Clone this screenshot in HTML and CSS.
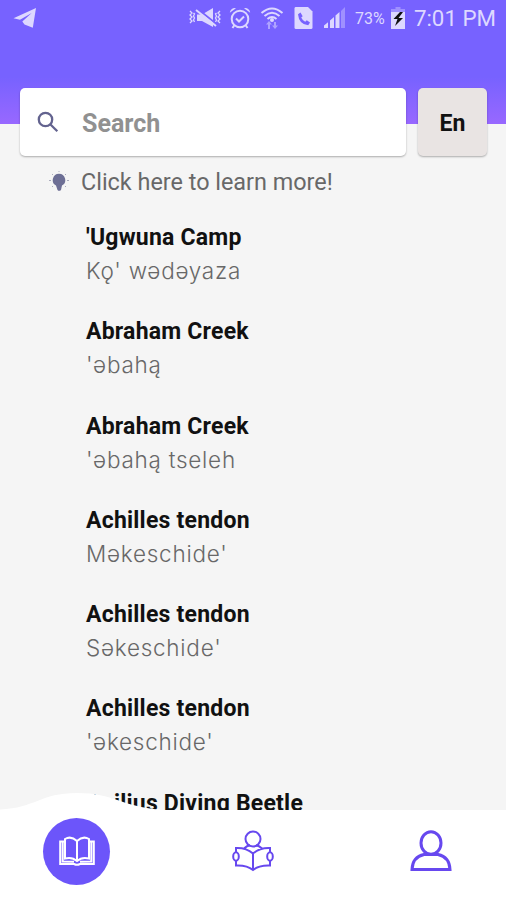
FILE: index.html
```html
<!DOCTYPE html>
<html lang="en">
<head>
<meta charset="utf-8">
<title>Dictionary</title>
<link rel="stylesheet" href="styles.css">
</head>
<body>
<div class="app">
  <header class="header">
    <div class="status">
      <svg class="telegram" width="24" height="22" viewBox="0 0 24 22"><path d="M0.5 11.2 23 1 19.8 20.7 11.5 17.5 9.3 14.5 18.7 6 7 12.8Z"/></svg>
      <svg class="mute" width="34" height="24" viewBox="0 0 34 24"><path class="line" d="M2 5l2 2-2 2 2 2-2 2 2 2-2 2M5.500 7l1 1-1 2 1 2-1 2 1 2M32 5l-2 2 2 2-2 2 2 2-2 2 2 2M28.500 7l-1 1 1 2-1 2 1 2-1 2"/><path d="M9 8.500h5L25 2v19l-11-6H9Z"/><path class="gap" d="M9 2.500 29 18.500"/><path class="slash" d="M8 4 28 20"/></svg>
      <svg class="alarm" width="22" height="24" viewBox="0 0 22 24"><circle class="ring" cx="11" cy="13" r="8.300"/><path class="ring" d="M7 12.500l3 3 5-5M5.500 19l-2 3M16.500 19l2 3"/><path d="M.8 6.800A5 5 0 0 1 7 2.200ZM21.200 6.800A5 5 0 0 0 15 2.200Z"/></svg>
      <svg class="wifi" width="24" height="24" viewBox="0 0 24 24"><path class="ring" d="M1.500 7Q12-2 22.500 7M4.500 10Q12 3.500 19.500 10M7.500 13Q12 9 16.500 13"/><circle cx="12" cy="14" r="2"/><g opacity=".55"><path d="M6 18.500 9 15l3 3.500h-2V23H8v-4.500ZM12 19.500h2V16h2v3.500h2L15 23Z"/></g></svg>
      <svg class="sim" width="19" height="24" viewBox="0 0 19 24"><path d="M1.500 1H14l4.500 4.500v16q0 1.500-1.500 1.500H2Q.5 23 .5 21.500V2.500Q.5 1 1.500 1Z"/><path class="phone" d="M4 8.200 6.500 6.500l2.200 3.700-1.500 1.300q1.300 3 4 4.200l1.600-1.500 3.200 2.400-1.800 2.600Q5 18.500 4 8.200Z"/></svg>
      <svg class="signal" width="24" height="24" viewBox="0 0 24 24"><path d="M1 22v-2.500l4-3.200V22ZM7 22v-7.500l4-3.500v11ZM12.500 22V9.500l4-3.500v16Z"/><path opacity=".4" d="M18 22V5l4-4v21Z"/></svg>
      <span class="percent">73%</span>
      <svg class="battery" width="14" height="23" viewBox="0 0 14 23"><path opacity=".4" d="M4.500 0h5v2H14v5H0V2h4.500Z"/><path d="M0 5h14v17H0Z"/><path class="bolt" d="M9 5 2.500 12h4L4 19l8-8H7.500L12 5Z"/></svg>
      <span class="time">7:01 PM</span>
    </div>
    <div class="search-row">
      <label class="search">
        <svg width="22" height="22" viewBox="0 0 22 22"><circle cx="8.500" cy="8.500" r="6.700"/><path d="M13.500 13.500 20.300 20.300"/></svg>
        <span>Search</span>
      </label>
      <button class="lang">En</button>
    </div>
  </header>
  <main class="content">
    <div class="tip">
      <svg width="20" height="20" viewBox="0 0 20 20"><path d="M10 2.800a6.300 6.300 0 0 1 3 11.800L12 19q-2 1.700-3.500 0L7 14.600A6.300 6.300 0 0 1 10 2.800Z"/><path class="rays" d="M10 0v1M3 3l1 1M17 3l-1 1M0 9.500h2M18 9.500h2M3 16l1-1M17 16l-1-1"/></svg>
      <span>Click here to learn more!</span>
    </div>
    <ul class="words">
      <li><b>'Ugwuna Camp</b><span>Kǫ' wədəyaza</span></li>
      <li><b>Abraham Creek</b><span>'əbahą</span></li>
      <li><b>Abraham Creek</b><span>'əbahą tseleh</span></li>
      <li><b>Achilles tendon</b><span>Məkeschide'</span></li>
      <li><b>Achilles tendon</b><span>Səkeschide'</span></li>
      <li><b>Achilles tendon</b><span>'əkeschide'</span></li>
      <li><b>Acilius Diving Beetle</b></li>
    </ul>
  </main>
  <nav class="tabs">
    <svg class="bump" width="160" height="19" viewBox="0 0 160 19"><path d="M0 19V17.500C36 16 40 1 77 1S122 15 160 17.500V19Z"/></svg>
    <a class="tab active"><svg width="36" height="30" viewBox="0 0 36 30"><path d="M18 5Q12-.5 6 3v19.500q7-2 12 2.500 5-4.500 12-2.500V3Q24-.5 18 5ZM18 5v20M6 5.500H1.200V28H15q3 1.500 6 0h13.800V5.500H30M3.700 6v19.500L15 25.800M32.300 6v19.500L21 25.800"/></svg></a>
    <a class="tab reader"><svg width="42" height="42" viewBox="0 0 42 42"><circle cx="21" cy="9" r="7.500"/><path d="M12 18.500Q15 15.500 18 15.200M30 18.500Q27 15.500 24 15.200M21 23.500Q14 17.500 4 18v4M21 23.500Q28 17.500 38 18v4M4 31v4.500q11-.5 17 4.500 6-5 17-4.500V31M21 23.500V40"/><ellipse cx="4" cy="26.500" rx="2.800" ry="4.200"/><ellipse cx="38" cy="26.500" rx="2.800" ry="4.200"/></svg></a>
    <a class="tab profile"><svg width="42" height="42" viewBox="0 0 42 42"><ellipse cx="21" cy="13" rx="10" ry="11.300"/><path d="M14 24.500Q2.500 27 2 39.500H40Q39.500 27 28 24.500Z"/></svg></a>
  </nav>
</div>
</body>
</html>
```
FILE: styles.css
```css
* { box-sizing: border-box; }
body { margin: 0; font-family: Roboto, "Liberation Sans", sans-serif; background: #f5f5f5; }
.app { height: 900px; display: flex; flex-direction: column; overflow: hidden; }
.header { height: 124px; flex: none; background: linear-gradient(#7762ff 0, #7762ff 62%, #9868ff 100%); }
.status { height: 36px; display: flex; align-items: center; padding: 0 10px 0 13px; color: #ddd8ff; }
.status svg { fill: #ddd8ff; flex: none; }
.status .line { fill: none; stroke: #ddd8ff; stroke-width: 1.3; }
.status .ring { fill: none; stroke: #ddd8ff; stroke-width: 2; }
.status .slash { stroke: #ddd8ff; stroke-width: 2; }
.status .gap { stroke: #7762ff; stroke-width: 2; }
.status .phone { fill: #7762ff; }
.status .bolt { fill: #111; }
.mute { margin-left: 151px; }
.alarm { margin-left: 7px; }
.wifi { margin-left: 9px; }
.sim { margin-left: 10px; }
.signal { margin-left: 10px; }
.percent { width: 30px; margin-left: 8px; font-size: 16px; white-space: nowrap; }
.battery { margin-left: 6px; }
.time { margin-left: auto; font-size: 22.300px; white-space: nowrap; }
.search-row { display: flex; gap: 12px; padding: 52px 19px 0 20px; }
.search, .lang { height: 68px; border-radius: 5px; box-shadow: 0 1px 2px rgba(0,0,0,.3); }
.search { flex: 1; display: flex; align-items: center; gap: 23px; padding: 2px 0 0 17px; background: #fff; color: #919191; font-size: 25px; font-weight: 700; }
.search svg { fill: none; stroke: #63638f; stroke-width: 2.3; margin-top: -3px; }
.lang { width: 69px; border: 0; padding: 2px 0 0; background: #e9e4e3; color: #111; font: 700 23px Roboto, sans-serif; }
.content { flex: 1; min-height: 0; overflow: hidden; padding-top: 43px; }
.tip { height: 30px; display: flex; align-items: center; gap: 12px; padding-left: 49px; color: #686868; font-size: 23.400px; }
.tip svg { fill: #6d6f95; margin-top: -2px; }
.rays { stroke: #a9aabc; stroke-width: 1; }
.words { list-style: none; margin: 0; padding: 24px 0 0 86px; }
.words li { height: 94.250px; white-space: nowrap; }
.words b, .words span { display: block; height: 33px; line-height: 33px; }
.words b { font-size: 23px; color: #111; letter-spacing: .22px; }
.words span { font-family: Inter, "Noto Sans", sans-serif; font-size: 22.500px; font-weight: 350; color: #686868; letter-spacing: .75px; }
.tabs { position: relative; height: 90px; flex: none; display: flex; align-items: center; background: #fff; padding: 0 54px 8px 43px; justify-content: space-between; }
.bump { position: absolute; left: 0; bottom: 89px; fill: #fff; }
.tab { display: flex; align-items: center; justify-content: center; }
.tab svg { fill: none; stroke: #6748ef; stroke-width: 2; }
.active { width: 67px; height: 67px; border-radius: 50%; background: #6c55fa; }
.active svg { stroke: #fff; }
.reader { margin-right: 14px; }
.profile svg { stroke-width: 3; }
```
